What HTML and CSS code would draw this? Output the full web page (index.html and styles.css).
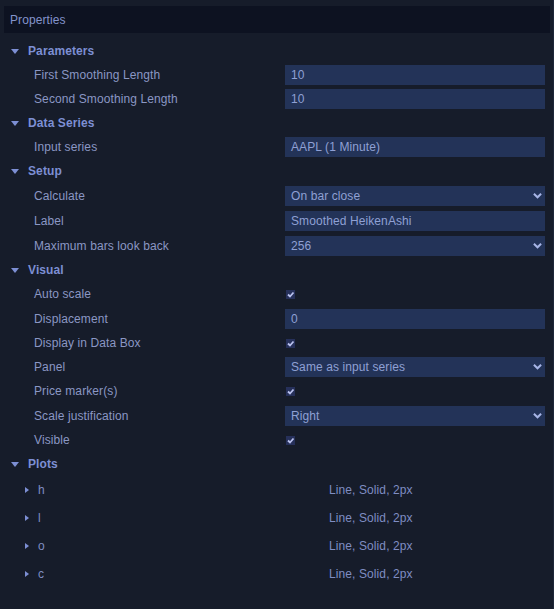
FILE: index.html
```html
<!DOCTYPE html>
<html>
<head>
<meta charset="utf-8">
<link rel="stylesheet" href="styles.css">
</head>
<body>
<div class="panel">
  <div class="title">Properties</div>

  <div class="group-head"><span class="tri-down"></span>Parameters</div>
  <div class="row"><span class="label">First Smoothing Length</span><div class="field">10</div></div>
  <div class="row"><span class="label">Second Smoothing Length</span><div class="field">10</div></div>

  <div class="group-head"><span class="tri-down"></span>Data Series</div>
  <div class="row"><span class="label">Input series</span><div class="field">AAPL (1 Minute)</div></div>

  <div class="group-head"><span class="tri-down"></span>Setup</div>
  <div class="row tall"><span class="label">Calculate</span><div class="field select">On bar close<svg class="chev" viewBox="0 0 10 7"><path d="M1 1.5 L5 5.5 L9 1.5" /></svg></div></div>
  <div class="row tall"><span class="label">Label</span><div class="field">Smoothed HeikenAshi</div></div>
  <div class="row tall"><span class="label">Maximum bars look back</span><div class="field select">256<svg class="chev" viewBox="0 0 10 7"><path d="M1 1.5 L5 5.5 L9 1.5" /></svg></div></div>

  <div class="group-head"><span class="tri-down"></span>Visual</div>
  <div class="row"><span class="label">Auto scale</span><span class="check"><svg viewBox="0 0 9 9"><path d="M2 4.5 L4 6.5 L7.5 2.5" /></svg></span></div>
  <div class="row tall"><span class="label">Displacement</span><div class="field">0</div></div>
  <div class="row"><span class="label">Display in Data Box</span><span class="check"><svg viewBox="0 0 9 9"><path d="M2 4.5 L4 6.5 L7.5 2.5" /></svg></span></div>
  <div class="row"><span class="label">Panel</span><div class="field select">Same as input series<svg class="chev" viewBox="0 0 10 7"><path d="M1 1.5 L5 5.5 L9 1.5" /></svg></div></div>
  <div class="row"><span class="label">Price marker(s)</span><span class="check"><svg viewBox="0 0 9 9"><path d="M2 4.5 L4 6.5 L7.5 2.5" /></svg></span></div>
  <div class="row tall"><span class="label">Scale justification</span><div class="field select">Right<svg class="chev" viewBox="0 0 10 7"><path d="M1 1.5 L5 5.5 L9 1.5" /></svg></div></div>
  <div class="row"><span class="label">Visible</span><span class="check"><svg viewBox="0 0 9 9"><path d="M2 4.5 L4 6.5 L7.5 2.5" /></svg></span></div>

  <div class="group-head"><span class="tri-down"></span>Plots</div>
  <div class="plot"><span class="plot-name"><span class="tri-right"></span>h</span><span class="plot-val">Line, Solid, 2px</span></div>
  <div class="plot"><span class="plot-name"><span class="tri-right"></span>l</span><span class="plot-val">Line, Solid, 2px</span></div>
  <div class="plot"><span class="plot-name"><span class="tri-right"></span>o</span><span class="plot-val">Line, Solid, 2px</span></div>
  <div class="plot"><span class="plot-name"><span class="tri-right"></span>c</span><span class="plot-val">Line, Solid, 2px</span></div>
</div>
</body>
</html>
```

FILE: styles.css
```css
html, body {
  margin: 0;
  padding: 0;
  background: #161c2a;
}
body {
  width: 554px;
  height: 609px;
  overflow: hidden;
  font-family: "Liberation Sans", Arial, sans-serif;
  font-size: 12px;
  letter-spacing: 0.1px;
  color: #8b97c4;
}
.panel {
  padding: 6px 3px 0 4px;
  border-right: 1px solid #1e2638;
  height: 609px;
  box-sizing: border-box;
}
.title {
  height: 27px;
  background: #0d1221;
  display: flex;
  align-items: center;
  padding-left: 6px;
  color: #8494cc;
  margin-bottom: 6px;
}
.group-head {
  height: 24px;
  display: flex;
  align-items: center;
  font-weight: bold;
  color: #7d8fd4;
  padding-left: 24px;
  position: relative;
}
.tri-down {
  position: absolute;
  left: 7px;
  top: 10px;
  width: 0;
  height: 0;
  border-left: 4.5px solid transparent;
  border-right: 4.5px solid transparent;
  border-top: 5px solid #7d8fd4;
}
.row {
  height: 24px;
  display: flex;
  align-items: center;
}
.row.tall {
  height: 25px;
}
.label {
  width: 281px;
  padding-left: 30px;
  box-sizing: border-box;
  flex: none;
}
.field {
  width: 260px;
  height: 20px;
  background: #233358;
  box-sizing: border-box;
  padding-left: 6px;
  display: flex;
  align-items: center;
  color: #8fa0d4;
  position: relative;
}
.chev {
  position: absolute;
  right: 3px;
  top: 6px;
  width: 9px;
  height: 7px;
  fill: none;
  stroke: #a7b5e6;
  stroke-width: 2.2;
}
.check {
  width: 9px;
  height: 9px;
  margin-left: 1px;
  background: #26305a;
  display: block;
}
.check svg {
  width: 9px;
  height: 9px;
  display: block;
  fill: none;
  stroke: #b9c1ee;
  stroke-width: 1.8;
}
.plot {
  height: 28px;
  display: flex;
  align-items: center;
}
.plot-name {
  width: 325px;
  padding-left: 34px;
  box-sizing: border-box;
  position: relative;
  color: #7f8dc2;
}
.tri-right {
  position: absolute;
  left: 21px;
  top: 4px;
  width: 0;
  height: 0;
  border-top: 3.5px solid transparent;
  border-bottom: 3.5px solid transparent;
  border-left: 4px solid #7d8fd4;
}
.plot-val {
  color: #7f8dc2;
}
```
